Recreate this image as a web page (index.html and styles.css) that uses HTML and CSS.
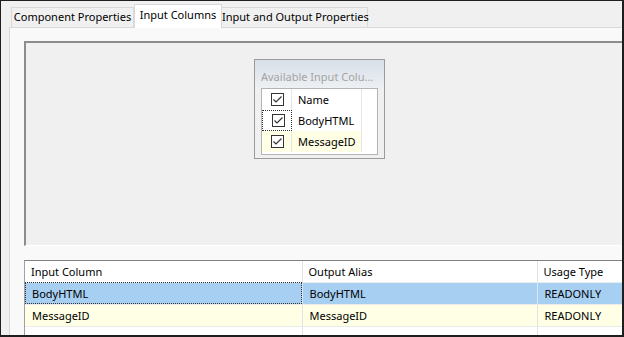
FILE: index.html
```html
<!DOCTYPE html>
<html lang="en">
<head>
    <meta charset="UTF-8">
    <title>Input Columns</title>
    <link rel="stylesheet" href="styles.css">
</head>
<body>
    <div class="window">
        <div class="tabs">
            <div class="tab tab-component">Component Properties</div>
            <div class="tab tab-columns active">Input Columns</div>
            <div class="tab tab-io">Input and Output Properties</div>
        </div>
        <div class="page">
            <div class="canvas">
                <div class="chooser">
                    <div class="chooser-title">Available Input Colu...</div>
                    <div class="list">
                        <div class="list-row head">
                            <div class="cb-cell">
                                <svg class="checkbox" width="13" height="13" viewBox="0 0 13 13">
                                    <rect x="0.5" y="0.5" width="12" height="12" fill="#fff" stroke="#333"></rect>
                                    <polyline points="2.5,6.5 5,9 10.5,3.5" fill="none" stroke="#333" stroke-width="1.2"></polyline>
                                </svg>
                            </div>
                            <div class="name-cell">Name</div>
                        </div>
                        <div class="list-row">
                            <div class="cb-cell focused">
                                <svg class="checkbox" width="13" height="13" viewBox="0 0 13 13">
                                    <rect x="0.5" y="0.5" width="12" height="12" fill="#fff" stroke="#333"></rect>
                                    <polyline points="2.5,6.5 5,9 10.5,3.5" fill="none" stroke="#333" stroke-width="1.2"></polyline>
                                </svg>
                            </div>
                            <div class="name-cell">BodyHTML</div>
                        </div>
                        <div class="list-row current">
                            <div class="cb-cell">
                                <svg class="checkbox" width="13" height="13" viewBox="0 0 13 13">
                                    <rect x="0.5" y="0.5" width="12" height="12" fill="#fff" stroke="#333"></rect>
                                    <polyline points="2.5,6.5 5,9 10.5,3.5" fill="none" stroke="#333" stroke-width="1.2"></polyline>
                                </svg>
                            </div>
                            <div class="name-cell">MessageID</div>
                        </div>
                    </div>
                </div>
            </div>
            <div class="grid">
                <table>
                    <thead>
                        <tr>
                            <th class="col-input">Input Column</th>
                            <th class="col-alias">Output Alias</th>
                            <th class="col-usage">Usage Type</th>
                        </tr>
                    </thead>
                    <tbody>
                        <tr class="selected">
                            <td class="focused">BodyHTML</td>
                            <td>BodyHTML</td>
                            <td>READONLY</td>
                        </tr>
                        <tr class="current">
                            <td>MessageID</td>
                            <td>MessageID</td>
                            <td>READONLY</td>
                        </tr>
                        <tr class="blank">
                            <td></td>
                            <td></td>
                            <td></td>
                        </tr>
                    </tbody>
                </table>
            </div>
        </div>
    </div>
</body>
</html>
```

FILE: styles.css
```css
* {
    box-sizing: border-box;
    margin: 0;
    padding: 0;
}

body {
    font-family: "Noto Sans", "Open Sans", sans-serif;
    font-size: 11px;
    color: #000;
    background: #f0f0f0;
}

.window {
    width: 624px;
    height: 337px;
    overflow: hidden;
    background: #f0f0f0;
    border-style: solid;
    border-color: #1e1e1e;
    border-width: 1px 2px 2px 1px;
}

/* tab strip */
.tabs {
    display: flex;
    align-items: flex-end;
    height: 26px;
    padding-left: 10px;
}

.tab {
    height: 20px;
    line-height: 18px;
    text-align: center;
    white-space: nowrap;
    background: #f0f0f0;
    border: 1px solid #d9d9d9;
    border-bottom: none;
}

.tab + .tab {
    border-left: none;
}

.tab-component {
    width: 123px;
}

.tab-columns {
    width: 88px;
}

.tab-io {
    width: 146px;
}

.tab.active {
    position: relative;
    z-index: 1;
    height: 24px;
    line-height: 19px;
    margin-bottom: -1px;
    background: #fff;
    border-left: 1px solid #d9d9d9;
    border-right: 1px solid #d9d9d9;
}

.tab.active + .tab {
    border-left: none;
}

/* tab page */
.page {
    width: 640px;
    height: 320px;
    margin-left: 8px;
    padding: 13px 0 0 14px;
    background: #f9f9f9;
    border: 1px solid #d9d9d9;
}

.canvas {
    width: 620px;
    height: 205px;
    padding: 16px 0 0 228px;
    background: #f0f0f0;
    border-style: solid;
    border-width: 2px 1px 1px 2px;
    border-color: #8c8c8c #fff #fff #8c8c8c;
}

.chooser {
    width: 131px;
    height: 100px;
    padding: 0 6px;
    border: 1px solid #9a9a9a;
    background: linear-gradient(#d7dfe9, #eef0f3 28px, #f0f0f0 28px);
}

.chooser-title {
    height: 28px;
    padding-top: 9px;
    color: #a3a3a3;
    white-space: nowrap;
}

.list {
    width: 117px;
    height: 67px;
    background: #fff;
    border: 1px solid #b4b4b4;
}

.list-row {
    display: flex;
    height: 21px;
    width: 100px;
}

.list-row.current {
    background: #ffffe5;
}

.cb-cell {
    width: 30px;
    display: flex;
    align-items: center;
    justify-content: center;
    border-right: 1px solid #e6e6e6;
    padding-left: 2px;
}

.cb-cell.focused {
    border: 1px dotted #333;
}

.checkbox {
    display: block;
}

.name-cell {
    flex: 1;
    line-height: 21px;
    padding-left: 6px;
    border-right: 1px solid #e6e6e6;
}

/* grid */
.grid {
    width: 620px;
    margin-top: 14px;
    background: #fff;
    border: 1px solid #a0a0a0;
    border-top-color: #828282;
}

table {
    border-collapse: collapse;
    table-layout: fixed;
    width: 620px;
}

th, td {
    height: 22px;
    text-align: left;
    font-weight: normal;
    white-space: nowrap;
    padding: 0 7px;
    border-right: 1px solid #e3e3e3;
    border-bottom: 1px solid #ebebeb;
}

th {
    height: 21px;
    padding-left: 6px;
}

.col-input {
    width: 277px;
}

.col-alias {
    width: 235px;
}

tr.selected td {
    background: #a7cff2;
    border-right-color: #d6e8f8;
}

tr.selected td.focused {
    outline: 1px dotted #333;
    outline-offset: -1px;
}

tr.current td {
    background: #ffffe5;
}
```
